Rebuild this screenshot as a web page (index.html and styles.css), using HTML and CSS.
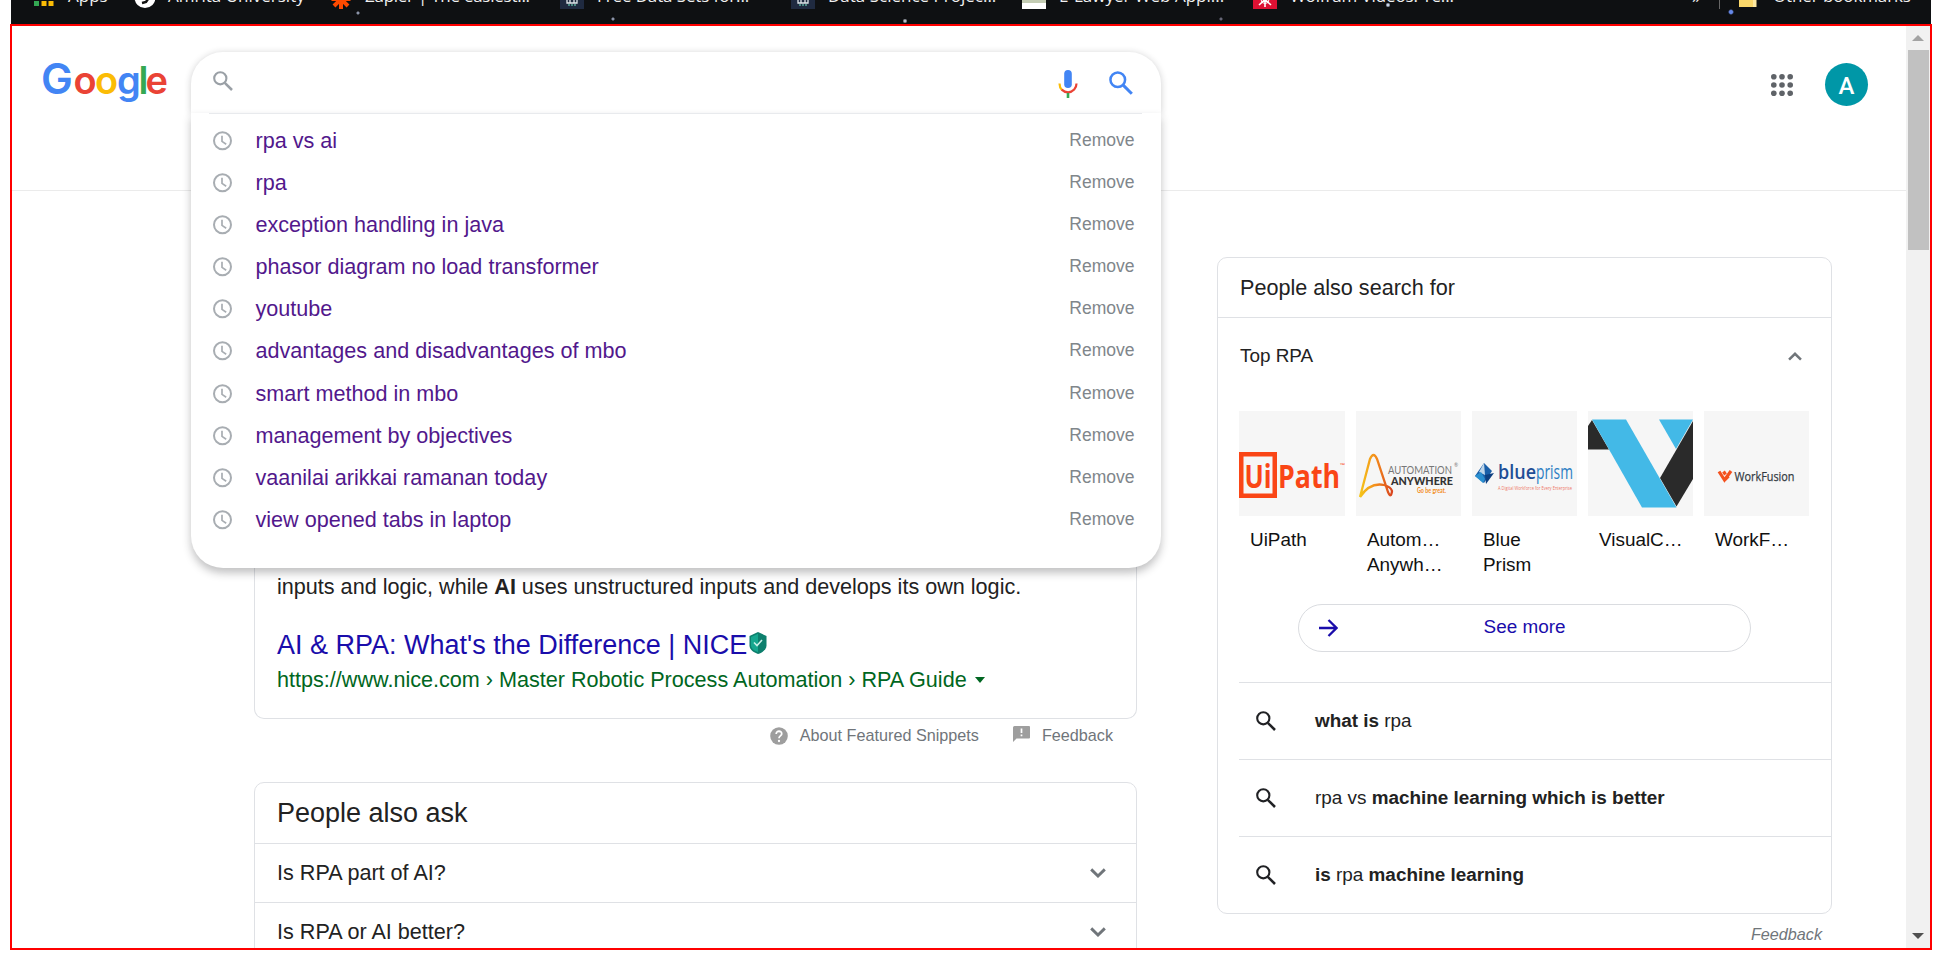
FILE: index.html
```
<!DOCTYPE html>
<html lang="en">
<head>
<meta charset="utf-8">
<title>Google Search</title>
<link rel="stylesheet" href="styles.css">
</head>
<body>
<svg class="defs" width="0" height="0">
  <symbol id="lens" viewBox="0 0 20 20"><circle cx="7.3" cy="7.3" r="6.100" fill="none" stroke="currentColor" stroke-width="2.100"/><path d="M11.800 11.800L19 19" stroke="currentColor" stroke-width="2.500"/></symbol>
  <symbol id="clock" viewBox="0 0 20 20"><circle cx="9.500" cy="9.800" r="8.500" fill="none" stroke="currentColor" stroke-width="2"/><path d="M9 4.800v5.600l4.200 2.800" fill="none" stroke="currentColor" stroke-width="1.700"/></symbol>
  <symbol id="down" viewBox="0 0 16 10"><path d="M1.200 1.400L8 8L14.800 1.400" fill="none" stroke="currentColor" stroke-width="2.900"/></symbol>
</svg>

<nav class="bookmarks">
  <div class="bookmark"><svg width="24" height="24"><path d="M3 0h5v5h-5zM3 8h5v5h-5z" fill="#ea4335"/><path d="M3 16h5v5h-5z" fill="#34a853"/><path d="M10.500 16h5v5h-5zM17.500 16h5v5h-5z" fill="#fbbc05"/></svg><span>Apps</span></div>
  <div class="bookmark"><svg width="24" height="24"><circle cx="14" cy="12.500" r="10.500" fill="#fff"/><path d="M15 10l2 4-2 3-4 1" fill="none" stroke="#111" stroke-width="2.500"/></svg><span>Amrita University</span></div>
  <div class="bookmark tight"><svg width="24" height="24"><path d="M13 4v20M3.500 14h19M6 7l14 14M20 7L6 21" stroke="#ff4a00" stroke-width="4"/></svg><span>Zapier | The easiest...</span></div>
  <div class="bookmark snug"><svg width="24" height="24"><path d="M0 0h24v24H0z" fill="#1f2a40"/><path d="M7 15v3h10v-3M10 15v3M14 15v3" fill="none" stroke="#dfe6ea" stroke-width="1.300"/><path d="M9 19v2M12 19v2M15 19v2" stroke="#58a898" stroke-width="1.500"/></svg><span>Free Data Sets for...</span></div>
  <div class="bookmark"><svg width="24" height="24"><path d="M0 0h24v24H0z" fill="#1f2a40"/><path d="M7 15v3h10v-3M10 15v3M14 15v3" fill="none" stroke="#dfe6ea" stroke-width="1.300"/><path d="M9 19v2M12 19v2M15 19v2" stroke="#58a898" stroke-width="1.500"/></svg><span>Data Science Projec...</span></div>
  <div class="bookmark"><svg width="24" height="24"><path d="M0 0h24v24H0z" fill="#fff"/><path d="M0 15h24v3H0z" fill="#c3ccb3"/></svg><span>E-Lawyer Web Appl...</span></div>
  <div class="bookmark snug"><svg width="24" height="24"><path d="M0 0h24v24H0z" fill="#dd1133"/><path d="M12 6v16M4 14h16M6 9l12 11M18 9L6 20" stroke="#fff" stroke-width="1.600"/><circle cx="12" cy="14.500" r="4" fill="none" stroke="#fff"/></svg><span>Wolfram Videos: Te...</span></div>
  <div class="more">»</div>
  <div class="bookmark folder snug"><svg width="24" height="24"><path d="M3 2h14l3 3v17H3z" fill="#fbd86b"/><path d="M17 10h3.500v12H17z" fill="#ffe9a0"/></svg><span>Other bookmarks</span></div>
</nav>

<div class="frame">
  <div class="page">
    <header class="header">
      <svg class="logo" width="126" height="44" viewBox="0 0 126 44">
        <text class="logo-text" y="31.300"><tspan x="-2" fill="#4285f4" font-size="42.500">G</tspan><tspan x="30.500" fill="#ea4335">o</tspan><tspan x="52" fill="#fbbc05">o</tspan><tspan x="74" fill="#4285f4">g</tspan><tspan x="95.500" fill="#34a853">l</tspan><tspan x="102.500" fill="#ea4335">e</tspan></text>
      </svg>
      <div class="search">
        <div class="search-bar">
          <svg class="grey" width="20" height="20"><use href="#lens"/></svg>
          <svg class="mic" width="20" height="28" viewBox="0 0 20 28"><rect x="6.200" y="0" width="7.600" height="18" rx="3.800" fill="#4285f4"/><path d="M1.500 13.500c0 3 .8 4.800 2.500 6.500" fill="none" stroke="#fbbc05" stroke-width="2.200"/><path d="M3.700 19.600c3.800 3.700 9 3.700 12.500 0c1.500-1.600 2.300-3.600 2.300-6.100" fill="none" stroke="#ea4335" stroke-width="2.200"/><path d="M10 23v5" stroke="#34a853" stroke-width="2.600"/></svg>
          <svg class="blue" width="24" height="24"><use href="#lens"/></svg>
        </div>
        <div class="suggestions">
          <div class="suggestion"><svg width="20" height="20"><use href="#clock"/></svg><span>rpa vs ai</span><a>Remove</a></div>
          <div class="suggestion"><svg width="20" height="20"><use href="#clock"/></svg><span>rpa</span><a>Remove</a></div>
          <div class="suggestion"><svg width="20" height="20"><use href="#clock"/></svg><span>exception handling in java</span><a>Remove</a></div>
          <div class="suggestion"><svg width="20" height="20"><use href="#clock"/></svg><span>phasor diagram no load transformer</span><a>Remove</a></div>
          <div class="suggestion"><svg width="20" height="20"><use href="#clock"/></svg><span>youtube</span><a>Remove</a></div>
          <div class="suggestion"><svg width="20" height="20"><use href="#clock"/></svg><span>advantages and disadvantages of mbo</span><a>Remove</a></div>
          <div class="suggestion"><svg width="20" height="20"><use href="#clock"/></svg><span>smart method in mbo</span><a>Remove</a></div>
          <div class="suggestion"><svg width="20" height="20"><use href="#clock"/></svg><span>management by objectives</span><a>Remove</a></div>
          <div class="suggestion"><svg width="20" height="20"><use href="#clock"/></svg><span>vaanilai arikkai ramanan today</span><a>Remove</a></div>
          <div class="suggestion"><svg width="20" height="20"><use href="#clock"/></svg><span>view opened tabs in laptop</span><a>Remove</a></div>
        </div>
      </div>
      <svg class="apps" width="22" height="22" viewBox="0 0 22 22" fill="#5f6368"><circle cx="2.800" cy="2.800" r="2.800"/><circle cx="11" cy="2.800" r="2.800"/><circle cx="19.200" cy="2.800" r="2.800"/><circle cx="2.800" cy="11" r="2.800"/><circle cx="11" cy="11" r="2.800"/><circle cx="19.200" cy="11" r="2.800"/><circle cx="2.800" cy="19.200" r="2.800"/><circle cx="11" cy="19.200" r="2.800"/><circle cx="19.200" cy="19.200" r="2.800"/></svg>
      <div class="avatar">A</div>
    </header>

    <main class="main">
      <section class="results">
        <article class="snippet">
          <p class="snippet-text">inputs and logic, while <b>AI</b> uses unstructured inputs and develops its own logic.</p>
          <h3 class="snippet-title">AI &amp; RPA: What's the Difference | NICE<svg width="18" height="22" viewBox="0 0 18 22"><path d="M9 0l8.500 4v9.500c0 4-4 7-8.500 8.500c-4.500-1.500-8.500-4.500-8.500-8.500V4z" fill="#0d7f6d"/><path d="M9 1.800L2 5v8.500c0 3 3 5.200 7 6.700z" fill="#16a78e"/><path d="M5 10.500l3 3l5-5.500" fill="none" stroke="#c9f0e8" stroke-width="1.600"/></svg></h3>
          <div class="snippet-url">https://www.nice.com › Master Robotic Process Automation › RPA Guide<i class="caret"></i></div>
        </article>
        <div class="snippet-links">
          <svg width="18" height="18" viewBox="0 0 18 18"><circle cx="9" cy="9" r="8.800" fill="#9e9e9e"/><path d="M6.200 7c0-3.800 5.800-3.500 5.500-.1c-.1 2-2.700 2.100-2.700 4.300" fill="none" stroke="#fff" stroke-width="1.800"/><circle cx="9" cy="14" r="1.150" fill="#fff"/></svg>
          <span>About Featured Snippets</span>
          <svg class="flag" width="17" height="16" viewBox="0 0 17 16"><path d="M1.500 0H16q1 0 1 1v10.500q0 1-1 1H3.500L0 16V1.500Q0 0 1.500 0z" fill="#9e9e9e"/><path d="M8.500 2.500v4.500M8.500 8.500v1.800" stroke="#fff" stroke-width="1.700"/></svg>
          <span>Feedback</span>
        </div>
        <div class="ask">
          <h2>People also ask</h2>
          <div class="question">Is RPA part of AI?<svg width="16" height="10"><use href="#down"/></svg></div>
          <div class="question">Is RPA or AI better?<svg width="16" height="10"><use href="#down"/></svg></div>
        </div>
      </section>

      <aside class="side">
        <div class="panel">
          <h2>People also search for</h2>
          <div class="group">Top RPA<svg width="14" height="9" viewBox="0 0 16 10"><path d="M1.200 8.600L8 1.900L14.800 8.600" fill="none" stroke="#70757a" stroke-width="2.900"/></svg></div>
          <div class="tiles">
            <div class="tile">
              <svg width="106" height="105" viewBox="0 0 106 105"><path d="M0 41h38v46H0zM4.500 45.500v37h29v-37z" fill="#fa4616" fill-rule="evenodd"/><g fill="#fa4616" font-family="Open Sans" font-weight="700"><text x="5.500" y="76.500" font-size="32" textLength="27" lengthAdjust="spacingAndGlyphs">Ui</text><text x="39" y="76.500" font-size="32" textLength="62" lengthAdjust="spacingAndGlyphs">Path</text><text x="101" y="56" font-size="5" textLength="5" lengthAdjust="spacingAndGlyphs">™</text></g></svg>
              <p>UiPath</p>
            </div>
            <div class="tile">
              <svg width="105" height="105" viewBox="0 0 105 105"><defs><linearGradient id="aa"><stop offset="0" stop-color="#f5c518"/><stop offset=".5" stop-color="#f38b1c"/><stop offset="1" stop-color="#d9441e"/></linearGradient></defs><path d="M4 86L14 48Q17.500 40 21 48L32 81Q35 88 36 80Q35 76 28 74Q14 71 4 86" fill="none" stroke="url(#aa)" stroke-width="2.300"/><g font-family="Lato"><text x="32" y="62.500" font-size="12" fill="#777" textLength="64" lengthAdjust="spacingAndGlyphs">AUTOMATION</text><text x="35" y="74" font-size="12" font-weight="900" fill="#333" textLength="62" lengthAdjust="spacingAndGlyphs">ANYWHERE</text><text x="61" y="82" font-size="6.500" font-weight="700" fill="#f38b1c" textLength="29" lengthAdjust="spacingAndGlyphs">Go be great.</text><text x="98" y="56" font-size="5" fill="#777">®</text></g></svg>
              <p>Autom…</p><p>Anywh…</p>
            </div>
            <div class="tile">
              <svg width="105" height="105" viewBox="0 0 105 105"><path d="M12 52l8 8-8 12-9-7z" fill="#1a5fa8"/><path d="M12 52l-5 9 6 3z" fill="#bfd6ea"/><path d="M13 64l9-2-8 11z" fill="#0d3f80"/><path d="M3 65l6-4 4 7-2 4z" fill="#2a8fd0"/><g font-family="Open Sans"><text x="26" y="68" font-size="20.500" font-weight="600" fill="#1f4e96" textLength="38" lengthAdjust="spacingAndGlyphs">blue</text><text x="64" y="68" font-size="20.500" fill="#2d7fc4" textLength="37" lengthAdjust="spacingAndGlyphs">prism</text><text x="26" y="78.500" font-size="5.500" fill="#ee7766" textLength="74" lengthAdjust="spacingAndGlyphs">A Digital Workforce for Every Enterprise</text></g></svg>
              <p>Blue</p><p>Prism</p>
            </div>
            <div class="tile">
              <svg width="105" height="105" viewBox="0 0 105 105"><path d="M0 15L4 9L21 38.500H0z" fill="#2a2a2a"/><path d="M71 8.500h34L88 38z" fill="#43b9e7"/><path d="M105 10v58L88.500 95.500L72 67z" fill="#2a2a2a"/><path d="M4 8.500h34L88.500 96.500H54z" fill="#43b9e7"/></svg>
              <p>VisualC…</p>
            </div>
            <div class="tile">
              <svg width="105" height="105" viewBox="0 0 105 105"><path d="M15 60.500l5.500 8.500 6.500-9M19.500 60.500l2 3M20.500 69l4-4" fill="none" stroke="#f4511e" stroke-width="3.200"/><text x="30.500" y="70" font-family="Open Sans" font-size="13.500" fill="#333a42" stroke="#333a42" stroke-width=".25" textLength="60" lengthAdjust="spacingAndGlyphs">WorkFusion</text></svg>
              <p>WorkF…</p>
            </div>
          </div>
          <div class="see-more"><svg width="19" height="18" viewBox="0 0 19 18"><path d="M0 9h17M9.500 1l8 8l-8 8" fill="none" stroke="#1a0dab" stroke-width="2.300"/></svg><span>See more</span></div>
          <div class="related"><svg width="20" height="20"><use href="#lens"/></svg><span><b>what is</b> rpa</span></div>
          <div class="related"><svg width="20" height="20"><use href="#lens"/></svg><span>rpa vs <b>machine learning which is better</b></span></div>
          <div class="related"><svg width="20" height="20"><use href="#lens"/></svg><span><b>is</b> rpa <b>machine learning</b></span></div>
        </div>
        <div class="panel-feedback">Feedback</div>
      </aside>
    </main>
  </div>
  <div class="scrollbar"><i class="arrow-up"></i><div class="thumb"></div><i class="arrow-down"></i></div>
</div>
</body>
</html>
```
FILE: styles.css
```
* { box-sizing: border-box; }
body { margin: 0; width: 1942px; height: 974px; overflow: hidden; background: #fff; font-family: "Liberation Sans", Arial, sans-serif; color: #222; }
svg { display: block; flex: none; }
h2, h3, p { margin: 0; font-weight: 400; }
.defs { position: absolute; }

.bookmarks { display: grid; grid-template-columns: 100px 197px 232px 231px 231px 231px 439px 27px 1fr; margin-left: 11px; width: 1920px; height: 24px; padding-left: 20px; overflow: hidden; background: radial-gradient(circle at 347px 13px, #8a93a8 1px, transparent 2px), radial-gradient(circle at 602px 19px, #8a93a8 1px, transparent 2px), radial-gradient(circle at 894px 21px, #b8bec8 1px, transparent 2.500px), radial-gradient(circle at 1377px 5px, #c8d4e8 1px, transparent 2.500px), radial-gradient(circle at 1720px 12px, #6688e8 1.500px, transparent 3px), radial-gradient(circle at 1210px 19px, #667 1px, transparent 2px), #0e1012; color: #f1f1f1; font: 17px/24px "Open Sans", "Noto Sans", sans-serif; white-space: nowrap; }
.bookmark { display: flex; gap: 13px; margin-top: -15px; height: 24px; }
.bookmark span { margin-top: -1px; }
.tight { letter-spacing: -.26px; }
.snug { letter-spacing: -.12px; }
.more { margin-top: -15px; }
.folder { border-left: 1px solid #666; padding-left: 16px; }

.frame { display: flex; margin-left: 10px; width: 1922px; height: 926px; border: 2px solid #f00; overflow: hidden; }
.page { width: 1894px; height: 922px; overflow: hidden; }
.header { display: flex; height: 165px; padding: 26px 38px 0 31px; border-bottom: 1px solid #ebebeb; }
.logo { margin-top: 11px; overflow: visible; }
.logo-text { font-family: Inter, sans-serif; font-size: 38px; font-weight: 600; }
.search { position: relative; z-index: 2; margin-left: 22px; width: 970px; height: 61px; }
.search-bar { display: flex; align-items: flex-start; height: 61px; padding: 19px 28px 0 21.500px; border-radius: 32px 32px 0 0; background: #fff; box-shadow: 0 1px 7px rgba(32, 33, 36, .22); }
.grey { color: #9aa0a6; }
.mic { margin: -1px 31px 0 auto; }
.blue { color: #4285f4; }
.suggestions { position: absolute; left: 0; top: 61px; width: 970px; height: 455px; padding: 6.600px 26.500px 0 22px; border-radius: 0 0 32px 32px; background: linear-gradient(#e8eaed, #e8eaed) 18px 0 / 933px 1px no-repeat #fff; box-shadow: 0 5px 8px rgba(32, 33, 36, .28); }
.suggestion { display: flex; align-items: center; height: 42.150px; font-size: 21.600px; color: #52188c; }
.suggestion svg { margin-right: 22.500px; color: #a8adb2; }
.suggestion a { margin: -1px 0 0 auto; font-size: 17.550px; color: #80868b; }
.apps { margin: 22px 32px 0 auto; }
.avatar { display: flex; align-items: center; justify-content: center; width: 43px; height: 43px; margin-top: 11px; padding-top: 3px; border-radius: 50%; background: #0097a7; color: #fff; font: 500 24px Roboto, sans-serif; }

.main { display: flex; padding-left: 242px; }
.results { width: 883px; }
.snippet { display: flex; flex-direction: column; justify-content: flex-end; height: 528px; padding: 0 22px 23px; border: 1px solid #dfe1e5; border-top: 0; border-radius: 0 0 10px 10px; }
.snippet-text { margin-bottom: 26px; font-size: 21.600px; line-height: 30px; }
.snippet-title { display: flex; align-items: center; margin-bottom: 3px; font-size: 27px; line-height: 34px; color: #1a0dab; }
.snippet-title svg { margin: -5px 0 0 2px; }
.snippet-url { display: flex; align-items: center; font-size: 21.600px; line-height: 30px; color: #006621; }
.caret { margin-left: 8px; border: 5px solid transparent; border-top: 6px solid #006621; border-bottom: 0; }
.snippet-links { display: flex; align-items: center; justify-content: flex-end; height: 33px; padding-right: 24px; font-size: 16.200px; color: #70757a; }
.snippet-links svg { margin-right: 12px; }
.snippet-links .flag { margin: -3px 12px 0 34px; }
.ask { margin-top: 30px; height: 220px; border: 1px solid #dfe1e5; border-radius: 10px; }
.ask h2 { padding-left: 22px; font-size: 27px; line-height: 60px; }
.question { display: flex; align-items: center; justify-content: space-between; height: 59px; padding: 0 30px 0 22px; border-top: 1px solid #dfe1e5; font-size: 21.600px; }
.question svg { color: #70757a; }

.side { width: 615px; margin: 66px 0 0 80px; }
.panel { height: 657px; border: 1px solid #dfe1e5; border-radius: 10px; }
.panel h2 { padding-left: 22px; font-size: 21.600px; line-height: 59px; }
.group { display: flex; align-items: center; justify-content: space-between; height: 77px; padding: 0 29px 0 22px; border-top: 1px solid #dfe1e5; font-size: 18.900px; }
.tiles { display: grid; grid-template-columns: 106px repeat(4, 105px); column-gap: 11px; height: 210px; padding: 17px 0 0 21px; }
.tile { font-size: 18.900px; line-height: 25px; color: #111; }
.tile svg { margin-bottom: 11px; background: #f6f6f6; }
.tile p { padding-left: 11px; }
.see-more { display: flex; align-items: center; width: 453px; height: 48px; margin: 0 0 30px 80px; padding: 0 20px; border: 1px solid #dadce0; border-radius: 24px; font-size: 18.900px; color: #1a0dab; }
.see-more span { flex: 1; margin: -2px 19px 0 0; text-align: center; }
.related { display: flex; align-items: center; height: 77px; margin-left: 21px; padding-left: 17px; border-top: 1px solid #dfe1e5; font-size: 18.900px; }
.related svg { margin-right: 39px; color: #202124; }
.panel-feedback { padding-right: 10px; text-align: right; font-size: 16.200px; font-style: italic; line-height: 41px; color: #70757a; }

.scrollbar { display: flex; flex-direction: column; align-items: center; width: 24px; height: 922px; padding: 9px 0; background: #f1f1f1; }
.arrow-up { border: 6px solid transparent; border-top: 0; border-bottom: 6px solid #a3a3a3; }
.thumb { width: 21px; height: 200px; margin-top: 9px; background: #c1c1c1; }
.arrow-down { margin-top: auto; border: 6px solid transparent; border-bottom: 0; border-top: 6px solid #505050; }
```
